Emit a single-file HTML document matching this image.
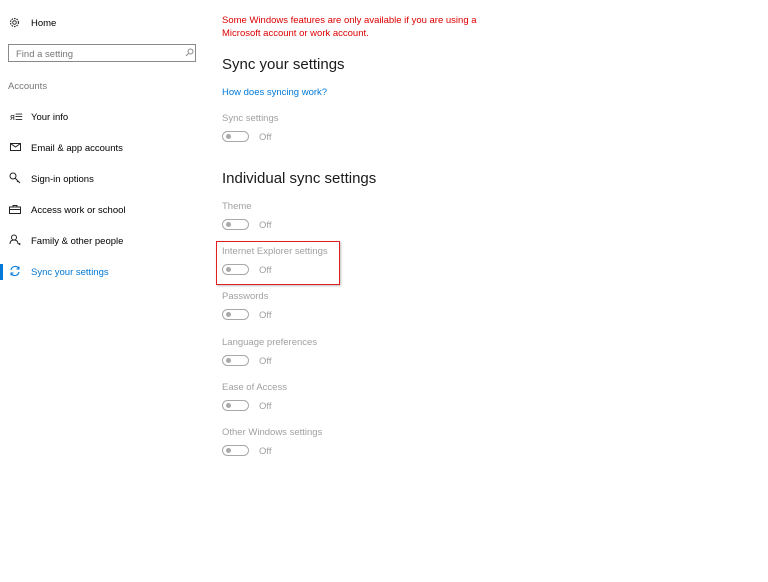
<!DOCTYPE html>
<html><head><style>
body{margin:0;width:768px;height:582px;background:#fff;font-family:"Liberation Sans",sans-serif;position:relative;overflow:hidden}
.a{position:absolute;white-space:nowrap}
.nav{font-size:9.5px;color:#000}
.lab{font-size:9.5px;color:#a0a0a0}
.tg{position:absolute;width:25px;height:9px;border:1.5px solid #a8a8a8;border-radius:7px}
.tg::after{content:"";position:absolute;left:3px;top:2px;width:5px;height:5px;border-radius:50%;background:#a8a8a8}
.off{font-size:9.5px;color:#a0a0a0}
.h{font-size:15px;color:#1a1a1a}
svg{position:absolute}
</style></head><body>
<svg style="left:9px;top:17px" width="11" height="11" viewBox="0 0 11 11"><circle cx="5.5" cy="5.5" r="4" fill="none" stroke="#333" stroke-width="1.2" stroke-dasharray="1.6 1"/><circle cx="5.5" cy="5.5" r="1.8" fill="none" stroke="#333"/></svg>
<div class="a nav" style="left:31px;top:18px">Home</div>
<div class="a" style="left:8px;top:44px;width:188px;height:18px;border:1.5px solid #8a8a8a;box-sizing:border-box"></div>
<div class="a" style="left:16px;top:49px;font-size:9.5px;color:#777">Find a setting</div>
<svg style="left:185px;top:48px" width="9" height="9" viewBox="0 0 9 9"><circle cx="5.5" cy="3.5" r="2.5" fill="none" stroke="#888"/><path d="M3.8 5.2L1 8" stroke="#888"/></svg>
<div class="a" style="left:8px;top:81px;font-size:9.5px;color:#777">Accounts</div>
<div class="a" style="left:10px;top:112px;font-size:9px;color:#222">ᴙ☰</div>
<div class="a nav" style="left:31px;top:112px">Your info</div>
<svg style="left:10px;top:143px" width="11" height="8"><rect x=".5" y=".5" width="10" height="7" fill="none" stroke="#222"/><path d="M.5 .5L5.5 4L10.5 .5" fill="none" stroke="#222"/></svg>
<div class="a nav" style="left:31px;top:143px">Email &amp; app accounts</div>
<svg style="left:9px;top:172px" width="12" height="12"><circle cx="4" cy="4" r="3" fill="none" stroke="#222"/><path d="M6 6L11 11M9 9L8 10" stroke="#222"/></svg>
<div class="a nav" style="left:31px;top:174px">Sign-in options</div>
<svg style="left:9px;top:205px" width="12" height="9"><rect x=".5" y="2" width="11" height="6.5" fill="none" stroke="#222"/><path d="M4 2V.5H8V2M.5 4.5H11.5" fill="none" stroke="#222"/></svg>
<div class="a nav" style="left:31px;top:205px">Access work or school</div>
<svg style="left:9px;top:234px" width="12" height="12"><circle cx="5" cy="3.5" r="2.5" fill="none" stroke="#222"/><path d="M1 10C1 7 3 6 5 6S9 7 9 10" fill="none" stroke="#222"/><circle cx="10.5" cy="10" r="1" fill="#222"/></svg>
<div class="a nav" style="left:31px;top:236px">Family &amp; other people</div>
<div class="a" style="left:0;top:264px;width:3px;height:16px;background:#0078d7"></div>
<svg style="left:9px;top:265px" width="12" height="12"><path d="M2 5A4.2 4.2 0 0 1 10 4M10 7A4.2 4.2 0 0 1 2 8" fill="none" stroke="#0078d7" stroke-width="1.1"/><path d="M10 1.5V4H7.5M2 10.5V8H4.5" fill="none" stroke="#0078d7"/></svg>
<div class="a nav" style="left:31px;top:267px;color:#0078d7">Sync your settings</div>

<div class="a" style="left:222px;top:14px;font-size:9.5px;color:#d00;line-height:13px">Some Windows features are only available if you are using a<br>Microsoft account or work account.</div>
<div class="a h" style="left:222px;top:56px">Sync your settings</div>
<div class="a" style="left:222px;top:87px;font-size:9.5px;color:#0078d7">How does syncing work?</div>
<div class="a lab" style="left:222px;top:113px">Sync settings</div>
<div class="tg" style="left:222px;top:131px"></div><div class="a off" style="left:259px;top:132px">Off</div>
<div class="a h" style="left:222px;top:170px">Individual sync settings</div>

<div class="a lab" style="left:222px;top:201px">Theme</div>
<div class="tg" style="left:222px;top:219px"></div><div class="a off" style="left:259px;top:220px">Off</div>
<div class="a" style="left:216px;top:241px;width:124px;height:44px;border:1.5px solid #e02020;box-sizing:border-box;box-shadow:1px 1px 2px rgba(0,0,0,.25)"></div>
<div class="a lab" style="left:222px;top:246px">Internet Explorer settings</div>
<div class="tg" style="left:222px;top:264px"></div><div class="a off" style="left:259px;top:265px">Off</div>
<div class="a lab" style="left:222px;top:291px">Passwords</div>
<div class="tg" style="left:222px;top:309px"></div><div class="a off" style="left:259px;top:310px">Off</div>
<div class="a lab" style="left:222px;top:337px">Language preferences</div>
<div class="tg" style="left:222px;top:355px"></div><div class="a off" style="left:259px;top:356px">Off</div>
<div class="a lab" style="left:222px;top:382px">Ease of Access</div>
<div class="tg" style="left:222px;top:400px"></div><div class="a off" style="left:259px;top:401px">Off</div>
<div class="a lab" style="left:222px;top:427px">Other Windows settings</div>
<div class="tg" style="left:222px;top:445px"></div><div class="a off" style="left:259px;top:446px">Off</div>
</body></html>
